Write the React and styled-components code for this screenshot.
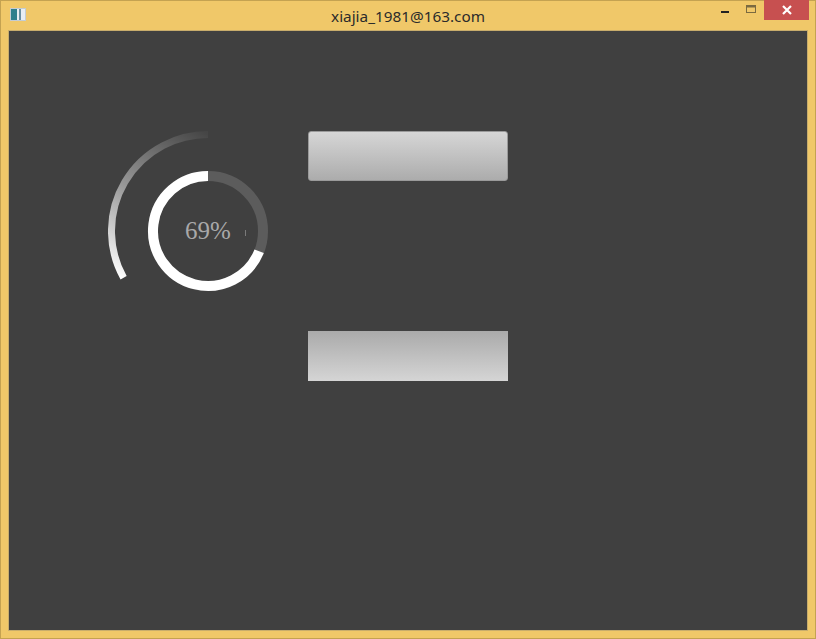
import React from "react";
import styled, { createGlobalStyle } from "styled-components";

const Global = createGlobalStyle`
  html, body { margin: 0; padding: 0; background: #f0c869; }
  #root { width: 816px; height: 639px; }
`;

const Window = styled.div`
  box-sizing: border-box;
  width: 816px;
  height: 639px;
  background: #f0c869;
  border: 1px solid #c4a251;
  display: flex;
  flex-direction: column;
`;

const TitleBar = styled.div`
  position: relative;
  height: 29px;
  flex: none;
  display: flex;
  align-items: center;
  justify-content: center;
  font-family: "Noto Sans", "Open Sans", sans-serif;
  font-size: 15.3px;
  color: #2b2b2b;
  padding-top: 1px;
  box-sizing: border-box;
`;

const AppIcon = styled.div`
  position: absolute;
  left: 9px;
  top: 7px;
  width: 16px;
  height: 13px;
  box-sizing: border-box;
  border: 1px solid #c3ccd3;
  background: linear-gradient(90deg, #2f7f8c 0 45%, #e8eef2 45% 60%, #6b8fa0 60% 68%, #e8eef2 68%);
`;

const Controls = styled.div`
  position: absolute;
  right: 6px;
  top: -1px;
  display: flex;
  align-items: flex-start;
`;

const CtrlButton = styled.div`
  width: ${(p) => p.$w}px;
  height: 20px;
  display: flex;
  align-items: center;
  justify-content: center;
  background: ${(p) => (p.$close ? "#c75050" : "transparent")};
`;

const Client = styled.div`
  box-sizing: border-box;
  margin: 0 7px 7px 7px;
  flex: 1;
  background: #404040;
  border: 1px solid #c8ad6c;
  display: flex;
  align-items: flex-start;
  padding: 100px 0 0 99px;
`;

const Gauge = styled.div`
  position: relative;
  width: 200px;
  height: 200px;
  flex: none;
`;

const Percent = styled.div`
  position: absolute;
  inset: 0;
  display: flex;
  align-items: center;
  justify-content: center;
  font-family: "Liberation Serif", "DejaVu Serif", serif;
  font-size: 25px;
  color: #a9a9a9;
`;

const Caret = styled.div`
  position: absolute;
  left: 137px;
  top: 99px;
  width: 1px;
  height: 6px;
  background: #7a7a7a;
`;

const ButtonColumn = styled.div`
  display: flex;
  flex-direction: column;
  gap: 150px;
`;

const Bar = styled.div`
  width: 200px;
  height: 50px;
  box-sizing: border-box;
  border-radius: ${(p) => (p.$rounded ? "3px" : "0")};
  border: ${(p) => (p.$rounded ? "1px solid #9a9a9a" : "none")};
  background: ${(p) =>
    p.$reverse
      ? "linear-gradient(180deg, #aaaaaa 0%, #d5d5d5 100%)"
      : "linear-gradient(180deg, #d6d6d6 0%, #acacac 100%)"};
`;

export default function App() {
  return (
    <>
      <Global />
      <Window>
        <TitleBar>
          <AppIcon />
          xiajia_1981@163.com
          <Controls>
            <CtrlButton $w={26}>
              <svg width="10" height="10" viewBox="0 0 10 10">
                <rect x="1" y="6" width="8" height="2" fill="#222" />
              </svg>
            </CtrlButton>
            <CtrlButton $w={26}>
              <svg width="11" height="10" viewBox="0 0 11 10">
                <rect x="0.5" y="0.5" width="9" height="7" fill="none" stroke="#7a6a40" />
                <rect x="0.5" y="0.5" width="9" height="2" fill="#7a6a40" />
              </svg>
            </CtrlButton>
            <CtrlButton $w={45} $close>
              <svg width="12" height="12" viewBox="0 0 12 12">
                <path d="M2 2 L10 10 M10 2 L2 10" stroke="#fff" strokeWidth="2.2" />
              </svg>
            </CtrlButton>
          </Controls>
        </TitleBar>
        <Client>
          <Gauge>
            <svg width="200" height="200" viewBox="0 0 200 200">
              <defs>
                <linearGradient id="outerGrad" gradientUnits="userSpaceOnUse" x1="100" y1="3" x2="16" y2="150">
                  <stop offset="0" stopColor="#ffffff" stopOpacity="0.03" />
                  <stop offset="0.5" stopColor="#ffffff" stopOpacity="0.45" />
                  <stop offset="1" stopColor="#ffffff" stopOpacity="1" />
                </linearGradient>
              </defs>
              <path
                d="M100 3.5 A96.5 96.5 0 0 0 15.6 146.8"
                fill="none"
                stroke="url(#outerGrad)"
                strokeWidth="7"
              />
              <circle cx="100" cy="100" r="55" fill="none" stroke="#5c5c5c" strokeWidth="10" />
              <path
                d="M100 45 A55 55 0 1 0 151.14 120.25"
                fill="none"
                stroke="#ffffff"
                strokeWidth="10"
              />
            </svg>
            <Percent>69%</Percent>
            <Caret />
          </Gauge>
          <ButtonColumn>
            <Bar $rounded />
            <Bar $reverse />
          </ButtonColumn>
        </Client>
      </Window>
    </>
  );
}
